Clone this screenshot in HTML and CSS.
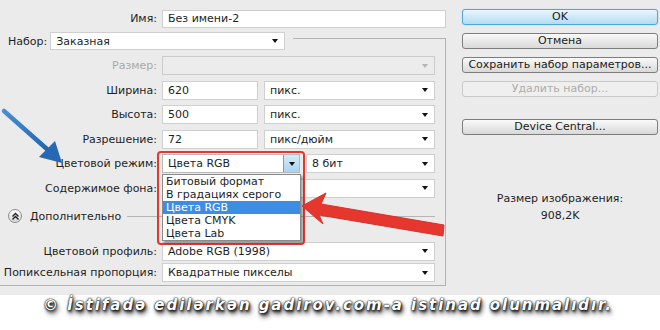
FILE: index.html
```html
<!DOCTYPE html>
<html lang="ru">
<head>
<meta charset="utf-8">
<title>Новый</title>
<link rel="stylesheet" href="styles.css">
</head>
<body>
<div class="page">
  <div class="dialog">
    <div class="form">
      <div class="row name-row">
        <span class="lbl">Имя:</span>
        <div class="field input name-input">Без имени-2</div>
      </div>
      <fieldset class="group">
        <legend class="preset">
          <span class="preset-lbl">Набор:</span>
          <div class="field select preset-select"><span>Заказная</span><i class="caret"></i></div>
        </legend>
        <div class="rows">
          <div class="row">
            <span class="lbl dim">Размер:</span>
            <div class="field select full disabled"><span></span><i class="caret light"></i></div>
          </div>
          <div class="row">
            <span class="lbl">Ширина:</span>
            <div class="pair">
              <div class="field input num">620</div>
              <div class="field select unit"><span>пикс.</span><i class="caret"></i></div>
            </div>
          </div>
          <div class="row">
            <span class="lbl">Высота:</span>
            <div class="pair">
              <div class="field input num">500</div>
              <div class="field select unit"><span>пикс.</span><i class="caret"></i></div>
            </div>
          </div>
          <div class="row">
            <span class="lbl">Разрешение:</span>
            <div class="pair">
              <div class="field input num">72</div>
              <div class="field select unit"><span>пикс/дюйм</span><i class="caret"></i></div>
            </div>
          </div>
          <div class="row">
            <span class="lbl">Цветовой режим:</span>
            <div class="pair">
              <div class="mode-wrap">
                <div class="field select mode"><span>Цвета RGB</span><b class="mode-btn"><i class="caret"></i></b></div>
                <div class="highlight"></div>
                <ul class="dropdown">
                  <li>Битовый формат</li>
                  <li>В градациях серого</li>
                  <li class="sel">Цвета RGB</li>
                  <li>Цвета CMYK</li>
                  <li>Цвета Lab</li>
                </ul>
              </div>
              <div class="field select bits"><span>8 бит</span><i class="caret"></i></div>
            </div>
          </div>
          <div class="row">
            <span class="lbl">Содержимое фона:</span>
            <div class="field select full"><span></span><i class="caret"></i></div>
          </div>
          <div class="advanced">
            <span class="adv-btn"><svg width="9" height="9" viewBox="0 0 9 9"><path d="M1.5 4.5 L4.5 1.5 L7.5 4.5 M1.5 7.5 L4.5 4.5 L7.5 7.5" fill="none" stroke="#222" stroke-width="1.4"/></svg></span>
            <span class="adv-text">Дополнительно</span>
            <span class="adv-line"></span>
          </div>
          <div class="row profile-row">
            <span class="lbl">Цветовой профиль:</span>
            <div class="field select full"><span>Adobe RGB (1998)</span><i class="caret"></i></div>
          </div>
          <div class="row pixel-row">
            <span class="lbl">Попиксельная пропорция:</span>
            <div class="field select full"><span>Квадратные пикселы</span><i class="caret"></i></div>
          </div>
        </div>
      </fieldset>
    </div>
    <div class="side">
      <div class="btn ok">OK</div>
      <div class="btn">Отмена</div>
      <div class="btn">Сохранить набор параметров...</div>
      <div class="btn off">Удалить набор...</div>
      <div class="btn central">Device Central...</div>
      <div class="size-info">
        <div>Размер изображения:</div>
        <div class="size-val">908,2K</div>
      </div>
    </div>
  </div>
  <div class="watermark">© İstifadə edilərkən gadirov.com-a istinad olunmalıdır.</div>

  <svg class="annot" width="660" height="330" viewBox="0 0 660 330">
    <defs>
      <linearGradient id="bl" x1="0" y1="0" x2="1" y2="1">
        <stop offset="0" stop-color="#4a8fd4"/>
        <stop offset="1" stop-color="#1f64b0"/>
      </linearGradient>
    </defs>
    <path d="M4 111 L48 150" stroke="url(#bl)" stroke-width="4.5" stroke-linecap="round"/>
    <path d="M62 163 L39 157 L55 141 Z" fill="#2767b3"/>
    <path d="M302 206 L326 193 L321 204 L444 225 L443 236 L319 215 L323 224 Z" fill="#e5372d" stroke="#d9302a" stroke-width="1" stroke-linejoin="round"/>
  </svg>
</div>
</body>
</html>
```
FILE: styles.css
```css
* { box-sizing: border-box; }
html, body { margin: 0; padding: 0; background: #fff; }
body { font-family: "DejaVu Sans", Verdana, sans-serif; font-size: 11px; color: #1e1e1e; }

.page { position: relative; width: 660px; height: 330px; overflow: hidden; }

.dialog { display: flex; height: 295px; background: #ebebeb; padding-top: 9px; }

.form { width: 456px; }

.row { display: flex; align-items: center; height: 19px; }
.lbl { width: 163px; flex: none; padding-right: 5px; text-align: right; white-space: nowrap; }
.lbl.dim { color: #a9a9a9; }

.field { height: 19px; border: 1px solid #cfcfcf; background: #fff; padding: 0 5px; display: flex; align-items: center; justify-content: space-between; white-space: nowrap; }
.name-row .lbl { width: 162px; }
.name-input { width: 284px; height: 18px; }
.caret { display: block; width: 0; height: 0; border-left: 3.5px solid transparent; border-right: 3.5px solid transparent; border-top: 4px solid #111; margin-right: 1px; }
.caret.light { border-top-color: #b5b5b5; }

.group { margin: -2px 0 0 -2px; padding: 0 0 3px 0; width: 448px; border: 1px solid #b2b2b2; }
.preset { display: flex; align-items: center; margin-left: 0; padding: 6px 8px 0 9px; }
.preset-lbl { padding-right: 3px; }
.preset-select { width: 235px; height: 18px; }

.rows { display: flex; flex-direction: column; gap: 5.5px; padding-top: 6px; }
.full { width: 273px; }
.disabled { background: #ececec; border-color: #cbcbcb; }
.pair { display: flex; gap: 6px; }
.num { width: 96px; }
.unit { width: 171px; }

.mode-wrap { position: relative; width: 138px; }
.mode { width: 138px; padding-right: 0; border-color: #b8b8b8; }
.mode-btn { width: 16px; height: 17px; display: flex; align-items: center; justify-content: center; background: linear-gradient(#d6ebf9, #a9d3f1); border-left: 1px solid #6d9fcc; }
.mode-btn .caret { margin: 0; }
.bits { width: 129px; }

.highlight { position: absolute; left: -5px; top: -3px; width: 148px; height: 94px; border: 2px solid #e4382f; border-radius: 4px; z-index: 2; }
.dropdown { position: absolute; left: 0; top: 20px; width: 139px; margin: 0; padding: 0; list-style: none; background: #fff; border: 1px solid #8a8a8a; box-shadow: 2px 2px 2px rgba(0,0,0,0.35); z-index: 3; }
.dropdown li { height: 13px; line-height: 13px; padding-left: 3px; }
.dropdown li.sel { background: #3d8ee2; color: #fff; }

.advanced { display: flex; align-items: center; height: 16px; margin-top: 5px; padding-left: 9px; }
.adv-btn { width: 14px; height: 14px; border-radius: 50%; border: 1px solid #8c8c8c; background: linear-gradient(#fdfdfd, #d8d8d8); display: flex; align-items: center; justify-content: center; }
.adv-text { margin-left: 8px; }
.adv-line { flex: 1; border-top: 1px solid #b5b5b5; margin: 0 10px 0 6px; }
.profile-row { margin-top: 12px; }
.pixel-row { margin-top: -3px; }

.side { width: 196px; margin-left: 6px; display: flex; flex-direction: column; align-items: stretch; }
.btn { height: 16px; line-height: 14px; text-align: center; border: 1px solid #7d7d7d; border-radius: 3px; background: linear-gradient(#fafafa, #d9d9d9); margin-bottom: 8px; color: #1b1b1b; }
.btn.ok { border-color: #4ea6da; background: linear-gradient(#e9f6fd, #b4dcf3); box-shadow: 0 0 1px #7cc4ee; }
.btn.off { border-color: #c9c9c9; background: #efefef; color: #acacac; }
.btn.central { margin-top: 14px; }
.size-info { margin-top: 47px; text-align: center; line-height: 17px; }

.watermark { text-align: center; font-family: "DejaVu Sans", Verdana, sans-serif; font-weight: bold; font-style: italic; font-size: 15px; letter-spacing: 1.95px; color: #fff; margin-top: 1px; padding-right: 4px; text-shadow: 0 0 1px #000, 0 0 2px #111, 1px 2px 3px #111, 2px 4px 5px #444; }

.annot { position: absolute; left: 0; top: 0; pointer-events: none; z-index: 5; }
```
